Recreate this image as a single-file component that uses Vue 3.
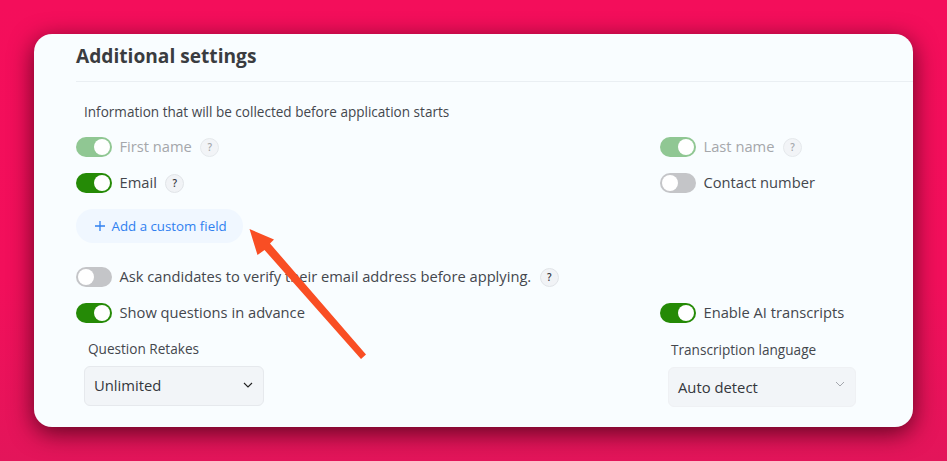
<template>
  <div class="page">
    <div class="card">
      <h2 class="card__title">Additional settings</h2>
      <div class="card__body">
        <p class="intro">Information that will be collected before application starts</p>

        <div class="fields">
          <div class="row">
            <div class="toggle-line is-disabled">
              <span class="toggle is-on" />
              <span class="label">First name</span>
              <span class="help">?</span>
            </div>
            <div class="toggle-line is-disabled">
              <span class="toggle is-on" />
              <span class="label">Last name</span>
              <span class="help">?</span>
            </div>
          </div>
          <div class="row">
            <div class="toggle-line">
              <span class="toggle is-on" />
              <span class="label">Email</span>
              <span class="help">?</span>
            </div>
            <div class="toggle-line">
              <span class="toggle" />
              <span class="label">Contact number</span>
            </div>
          </div>
        </div>

        <button class="add-btn" type="button">
          <svg width="12" height="12" viewBox="0 0 12 12" aria-hidden="true">
            <path d="M6 1v10M1 6h10" stroke="#2f80f0" stroke-width="1.3" fill="none" />
          </svg>
          Add a custom field
        </button>

        <div class="fields">
          <div class="toggle-line">
            <span class="toggle" />
            <span class="label">Ask candidates to verify their email address before applying.</span>
            <span class="help">?</span>
          </div>
          <div class="row">
            <div class="toggle-line">
              <span class="toggle is-on" />
              <span class="label">Show questions in advance</span>
            </div>
            <div class="toggle-line">
              <span class="toggle is-on" />
              <span class="label">Enable AI transcripts</span>
            </div>
          </div>
        </div>

        <div class="row row--selects">
          <div class="select-field">
            <span class="select-field__label">Question Retakes</span>
            <div class="select">
              Unlimited
              <svg width="10" height="6" viewBox="0 0 10 6" aria-hidden="true">
                <path d="M1 1l4 4 4-4" stroke="#222" stroke-width="1.1" fill="none" />
              </svg>
            </div>
          </div>
          <div class="select-field select-field--lang">
            <span class="select-field__label">Transcription language</span>
            <div class="select select--muted">
              Auto detect
              <svg class="select__chevron" width="10" height="6" viewBox="0 0 10 6" aria-hidden="true">
                <path d="M1 1l4 4 4-4" stroke="#a4a7ad" stroke-width="1" fill="none" />
              </svg>
            </div>
          </div>
        </div>
      </div>
    </div>

    <!-- Seta de anotação por cima do cartão -->
    <svg class="arrow" width="947" height="461" viewBox="0 0 947 461" aria-hidden="true">
      <path d="M249.500 229L274 239.500L270 243.500L366 354.500L361 359L264.500 250L257.500 255Z" fill="#f94e24" />
    </svg>
  </div>
</template>

<script setup>
</script>

<style>
html,
body {
  margin: 0;
  padding: 0;
}
</style>

<style scoped>
.page {
  position: relative;
  box-sizing: border-box;
  width: 947px;
  height: 461px;
  padding: 34px 34px 34px;
  overflow: hidden;
  background: linear-gradient(180deg, #f40e5b 0%, #f20f5b 60%, #e3155a 100%);
  font-family: "Open Sans", "Liberation Sans", sans-serif;
  color: #44474d;
}

.card {
  box-sizing: border-box;
  width: 879px;
  height: 393px;
  padding-left: 42px;
  border-radius: 18px;
  background: #f9fdff;
  box-shadow: 0 6px 24px rgba(50, 0, 15, 0.75);
}

.card__title {
  box-sizing: border-box;
  height: 48px;
  margin: 0;
  padding-top: 9px;
  border-bottom: 1px solid #eaeff3;
  font-size: 19.15px;
  line-height: 26px;
  font-weight: 700;
  color: #3a3c40;
}

.card__body {
  display: flex;
  flex-direction: column;
  align-items: flex-start;
}

.intro {
  margin: 20px 0 0 8px;
  font-size: 13.55px;
  line-height: 20px;
}

.fields {
  display: flex;
  flex-direction: column;
  gap: 16px;
  margin-top: 15px;
}

.row {
  display: grid;
  grid-template-columns: 584px 1fr;
}

.toggle-line {
  display: flex;
  align-items: center;
  gap: 7.5px;
  height: 20px;
}

.toggle {
  position: relative;
  flex: none;
  width: 36px;
  height: 20px;
  border-radius: 10px;
  background: #c4c5c8;
}

.toggle::after {
  content: "";
  position: absolute;
  top: 2px;
  left: 2px;
  width: 16px;
  height: 16px;
  border-radius: 50%;
  background: #fff;
}

.toggle.is-on {
  background: #258a06;
}

.toggle.is-on::after {
  left: 18px;
}

.label {
  margin-bottom: 2px;
  font-size: 14.7px;
  line-height: 18px;
}

.help {
  display: flex;
  align-items: center;
  justify-content: center;
  box-sizing: border-box;
  width: 19px;
  height: 19px;
  margin-left: 1px;
  border: 1px solid #e1e4e8;
  border-radius: 50%;
  background: #f1f3f6;
  font-size: 10px;
  font-weight: 600;
  color: #33363b;
}

.is-disabled .toggle {
  background: #90c793;
}

.is-disabled .label {
  color: #a5a7ab;
}

.is-disabled .help {
  color: #8f9296;
  opacity: 0.8;
}

.add-btn {
  display: flex;
  align-items: center;
  gap: 5.5px;
  box-sizing: border-box;
  width: 167px;
  height: 34px;
  margin-top: 16px;
  padding: 0 0 0 18px;
  border: 0;
  border-radius: 17px;
  background: #f0f7ff;
  font-family: inherit;
  font-size: 13.3px;
  color: #2f80f0;
}

.add-btn + .fields {
  margin-top: 24px;
}

.row--selects {
  width: 100%;
  margin-top: 17px;
}

.select-field {
  display: flex;
  flex-direction: column;
  align-items: flex-start;
  gap: 8px;
  padding-left: 8px;
}

.select-field__label {
  padding-left: 4px;
  font-size: 13.6px;
  line-height: 18px;
}

.select-field--lang .select-field__label {
  padding-left: 3px;
  position: relative;
  top: 1px;
}

.select {
  display: flex;
  align-items: center;
  justify-content: space-between;
  box-sizing: border-box;
  width: 180px;
  height: 40px;
  padding: 0 10px 2px 9px;
  border: 1px solid #e6e9ed;
  border-radius: 6px;
  background: #f2f5f8;
  font-size: 14.8px;
  color: #34373c;
}

.select--muted {
  width: 188px;
  margin-top: 1px;
  padding-bottom: 0;
  border-color: #eff1f4;
}

.select__chevron {
  position: relative;
  top: -3px;
}

.arrow {
  position: absolute;
  inset: 0;
  pointer-events: none;
}
</style>
